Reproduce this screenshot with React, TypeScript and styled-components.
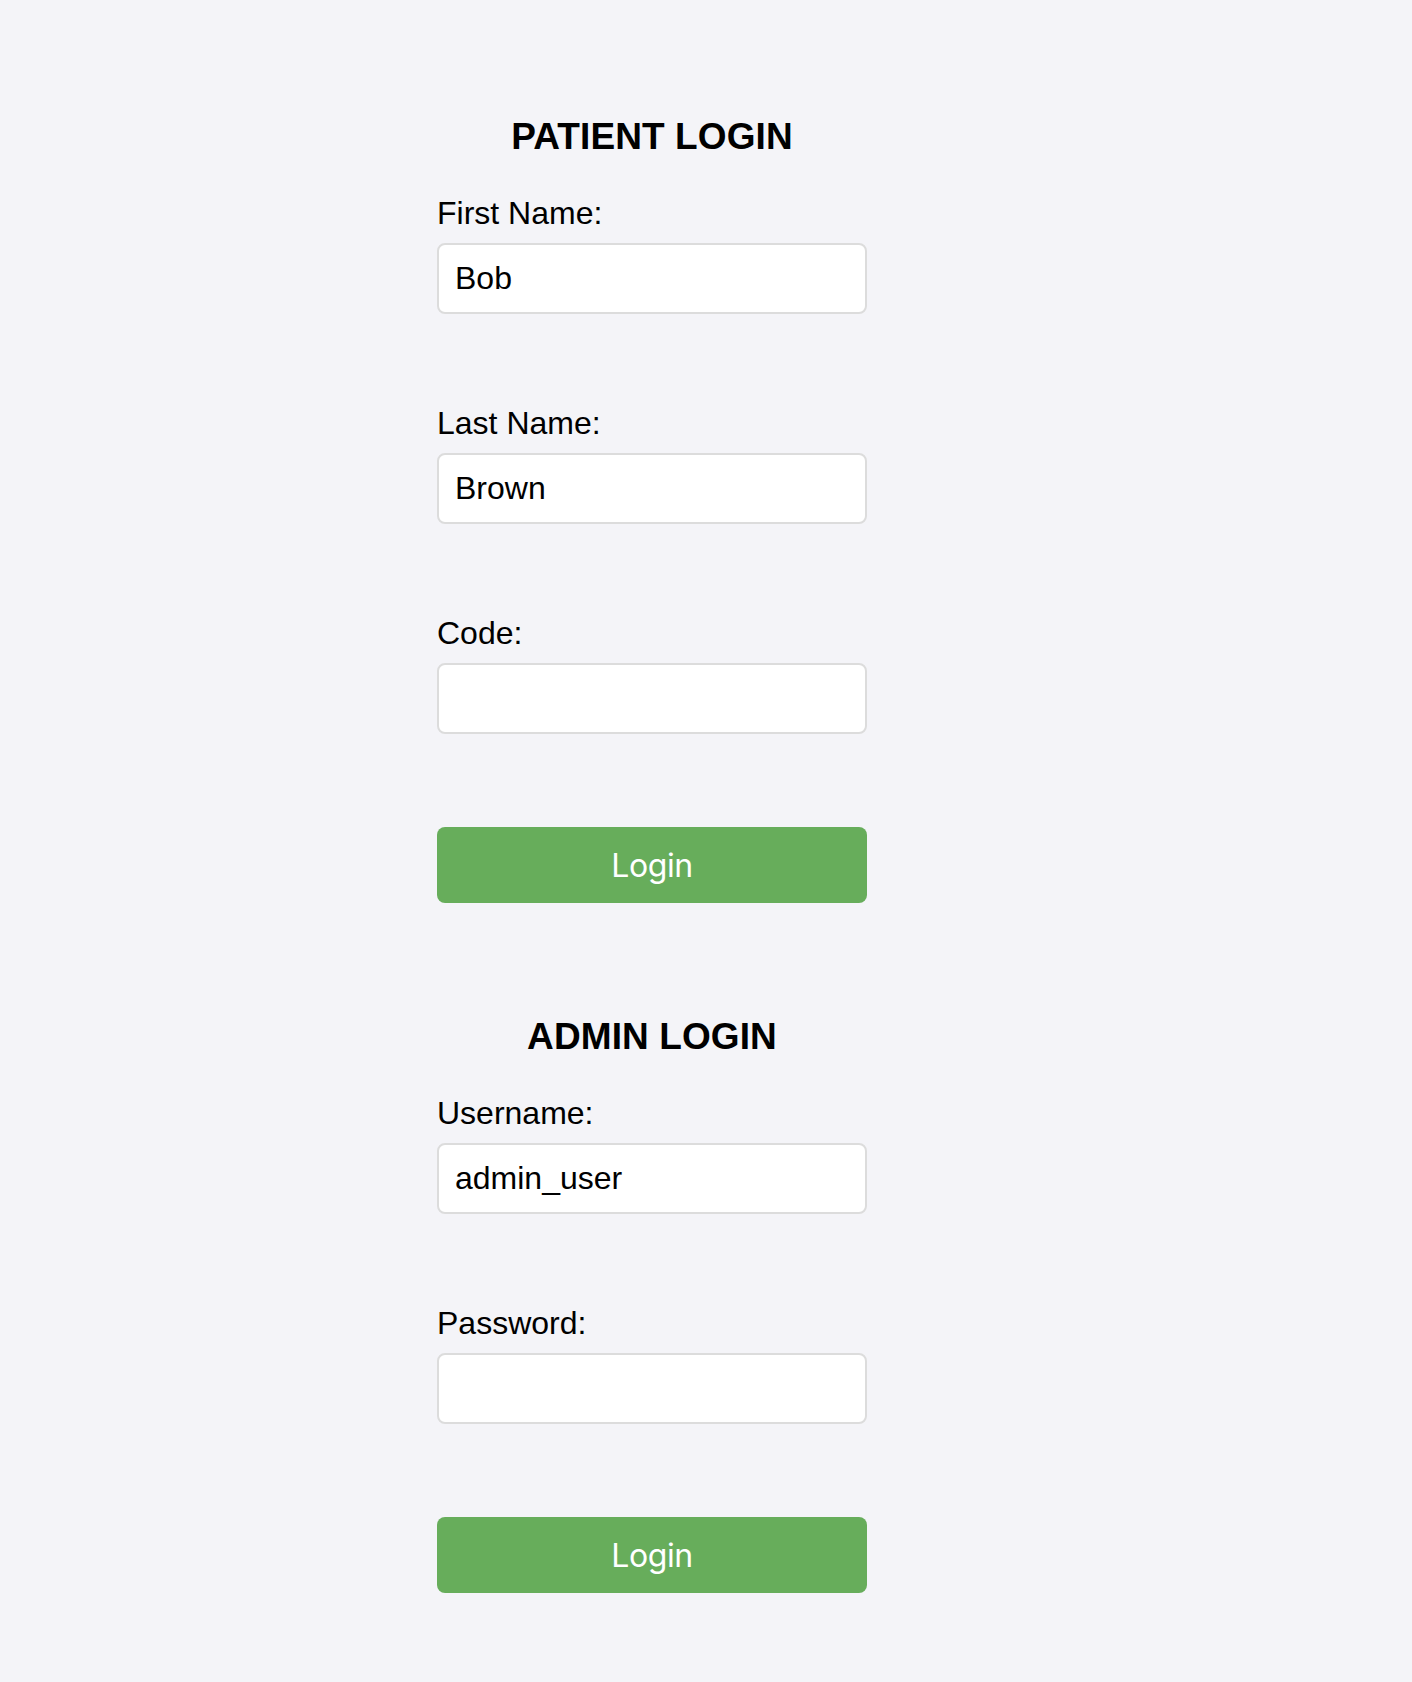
import React, { useState } from "react"
import styled, { createGlobalStyle } from "styled-components"

const GlobalStyle = createGlobalStyle`
  html, body {
    margin: 0;
    padding: 0;
    background: #f4f4f8;
  }
  body {
    font-family: "Liberation Sans", Arial, Helvetica, sans-serif;
    color: #000;
  }
`

type FieldDef = { id: string; label: string; value: string; type?: string }

const patientFields: FieldDef[] = [
  { id: "first", label: "First Name:", value: "Bob" },
  { id: "last", label: "Last Name:", value: "Brown" },
  { id: "code", label: "Code:", value: "" },
]

const adminFields: FieldDef[] = [
  { id: "username", label: "Username:", value: "admin_user" },
  { id: "password", label: "Password:", value: "", type: "password" },
]

const LoginForm: React.FC<{ title: string; fields: FieldDef[]; first?: boolean }> = ({ title, fields, first }) => {
  const [values, setValues] = useState<Record<string, string>>(
    Object.fromEntries(fields.map(f => [f.id, f.value]))
  )

  return (
    <S.Form first={first} onSubmit={e => e.preventDefault()}>
      <S.Heading>{title}</S.Heading>
      {fields.map(f => (
        <S.Field key={f.id}>
          <S.Label htmlFor={f.id}>{f.label}</S.Label>
          <S.Input
            id={f.id}
            type={f.type || "text"}
            value={values[f.id]}
            onChange={e => setValues({ ...values, [f.id]: e.target.value })}
          />
        </S.Field>
      ))}
      <S.Button type="submit">Login</S.Button>
    </S.Form>
  )
}

export default function App() {
  return (
    <>
      <GlobalStyle />
      <S.Page>
        <S.Column>
          <LoginForm title="PATIENT LOGIN" fields={patientFields} first />
          <LoginForm title="ADMIN LOGIN" fields={adminFields} />
        </S.Column>
      </S.Page>
    </>
  )
}

const S = {
  Page: styled.div`
    display: flex;
    justify-content: center;
    padding: 116px 108px 89px 0;
    min-height: 100vh;
    box-sizing: border-box;
  `,
  Column: styled.div`
    display: flex;
    flex-direction: column;
    width: 430px;
  `,
  Form: styled.form<{ first?: boolean }>`
    display: flex;
    flex-direction: column;
    margin-top: ${({ first }) => (first ? "0" : "113px")};
  `,
  Heading: styled.h2`
    margin: 0 0 37px;
    font-size: 37px;
    line-height: 42px;
    font-weight: 700;
    letter-spacing: 0.1px;
    text-align: center;
  `,
  Field: styled.div`
    display: flex;
    flex-direction: column;
    margin-bottom: 91px;
  `,
  Label: styled.label`
    font-size: 32px;
    line-height: 37px;
    margin-bottom: 11px;
  `,
  Input: styled.input`
    box-sizing: border-box;
    width: 100%;
    height: 71px;
    padding: 0 16px;
    border: 2px solid #dcdcdc;
    border-radius: 8px;
    background: #fff;
    font-family: "Liberation Sans", Arial, sans-serif;
    font-size: 32px;
    color: #000;
    outline: none;
  `,
  Button: styled.button`
    margin-top: 2px;
    height: 76px;
    width: 100%;
    border: none;
    border-radius: 8px;
    background: #67ad5b;
    color: #fff;
    font-family: Inter, "Noto Sans", sans-serif;
    font-size: 32px;
    letter-spacing: -0.4px;
    cursor: pointer;
  `,
}
